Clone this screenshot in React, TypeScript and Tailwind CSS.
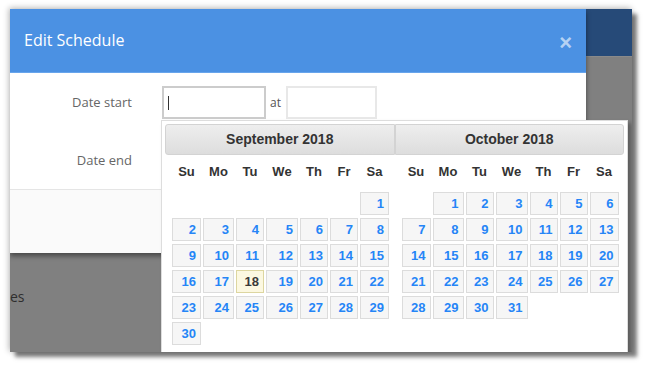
const months = [
  { name: "September 2018", start: 6, days: 30 },
  { name: "October 2018", start: 1, days: 31 },
];

const weekdays = ["Su", "Mo", "Tu", "We", "Th", "Fr", "Sa"];

function MonthTable({ name, start, days, first }: { name: string; start: number; days: number; first: boolean }) {
  const cells: (number | null)[] = [];
  for (let i = 0; i < start; i++) cells.push(null);
  for (let d = 1; d <= days; d++) cells.push(d);

  return (
    <div className="w-[230px]">
      <div
        className={`h-[31px] flex items-center justify-center border border-[#d3d3d3] bg-gradient-to-b from-[#eeeeee] to-[#dddddd] text-[14px] font-bold text-[#333] ${
          first ? "rounded-l-[3px]" : "rounded-r-[3px]"
        }`}
      >
        {name}
      </div>
      <div className="ml-[7px] grid grid-cols-[29px_31px_28px_32px_28px_28px_29px] grid-rows-[34px_repeat(6,23px)] gap-x-[2px] gap-y-[3px]">
        {weekdays.map((w) => (
          <div key={w} className="flex items-center justify-center text-[13px] font-bold text-[#333]">
            {w}
          </div>
        ))}
        {cells.map((d, i) =>
          d === null ? (
            <div key={`e${i}`} />
          ) : (
            <div
              key={d}
              className={`border text-right pr-[4px] text-[13px] font-bold leading-[21px] ${
                name.startsWith("September") && d === 18
                  ? "bg-[#fcf8e1] border-[#ddd6a0] text-[#3a3a3a]"
                  : "bg-[#f6f6f6] border-[#dcdcdc] text-[#2585f7]"
              }`}
            >
              {d}
            </div>
          )
        )}
      </div>
    </div>
  );
}

export default function App() {
  return (
    <div className="w-[646px] h-[365px] bg-white overflow-hidden pt-[9px] pl-[10px] font-['Open_Sans',sans-serif]">
      <div className="relative w-[622px] h-[343px] overflow-hidden bg-[#808080] shadow-[5px_5px_4px_rgba(0,0,0,0.5),-1px_-1px_6px_rgba(0,0,0,0.3)]">
        {/* dimmed page behind */}
        <div className="h-[47px] bg-[#264a78]" />
        <div className="border-t border-[#8a8a8a] pt-[230px] text-[14px] leading-[20px] text-[#2e2e2e]">es</div>

        {/* modal */}
        <div className="absolute left-0 top-0 w-[576px] bg-white shadow-[0_3px_5px_rgba(0,0,0,0.45)]">
          <div className="h-[64px] flex items-center justify-between pl-[14px] pr-[14px] bg-[#4b91e3] border-b border-[#68a5ec]">
            <span className="mb-[2px] text-[16px] text-white">Edit Schedule</span>
            <span className="mt-[4px] text-[22px] font-bold leading-none text-white/60 font-['Liberation_Sans',sans-serif]">×</span>
          </div>
          <div className="pt-[13px] pb-[12px] border-b border-[#e5e5e5]">
            <div className="flex items-center h-[33px]">
              <div className="w-[122px] text-right text-[13px] text-[#666]">Date start</div>
              <div className="ml-[30px] w-[104px] h-[33px] border-2 border-[#cccccc] flex items-center pl-[4px]">
                <div className="w-px h-[14px] bg-[#333]" />
              </div>
              <span className="ml-[4px] w-[16px] text-[12px] text-[#555]">at</span>
              <div className="w-[91px] h-[33px] border-2 border-[#e8e8e8]" />
            </div>
            <div className="flex items-center h-[33px] mt-[25px]">
              <div className="w-[122px] text-right text-[13px] text-[#666]">Date end</div>
            </div>
          </div>
          <div className="h-[63px] bg-[#fafafa]" />
        </div>

        {/* datepicker popup */}
        <div className="absolute left-[151px] top-[111px] w-[467px] h-[260px] bg-white border border-[#dddddd] p-[3px] shadow-[3px_3px_4px_rgba(0,0,0,0.3)] font-['Liberation_Sans',Arial,sans-serif]">
          <div className="flex">
            {months.map((m, i) => (
              <MonthTable key={m.name} {...m} first={i === 0} />
            ))}
          </div>
        </div>
      </div>
    </div>
  );
}
